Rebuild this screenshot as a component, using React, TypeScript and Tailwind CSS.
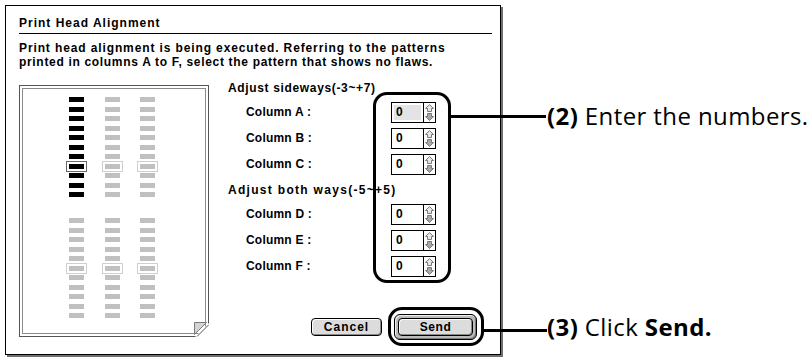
import React from 'react';

const ui = "[font-family:'Liberation_Sans',Arial,sans-serif] font-bold text-[12px] text-black";

const barY1 = Array.from({ length: 11 }, (_, i) => 8 + i * 9.5);
const barY2 = Array.from({ length: 11 }, (_, i) => 129 + i * 9.5);
const barX = [46, 82, 117];

function Pattern() {
  return (
    <div className="relative w-[190px] h-[252px] border border-[#555] p-[2px] bg-white">
      <div className="h-full border border-[#8a8a8a]">
        <svg width="182" height="244" viewBox="0 0 182 244" className="block" shapeRendering="crispEdges">
          {barX.map((x, c) =>
            barY1.map((y, i) => (
              <g key={`a${c}${i}`}>
                {i === 7 && (
                  <rect x={x - 2.5} y={y - 2.5} width={20} height={10} fill="none" stroke={c === 0 ? '#6a6a6a' : '#cfcfcf'} />
                )}
                <rect x={x} y={y} width={15} height={5} fill={c === 0 ? '#000' : '#c0c0c0'} />
              </g>
            ))
          )}
          {barX.map((x, c) =>
            barY2.map((y, i) => (
              <g key={`b${c}${i}`}>
                {i === 5 && <rect x={x - 2.5} y={y - 2.5} width={20} height={10} fill="none" stroke="#cfcfcf" />}
                <rect x={x} y={y} width={15} height={5} fill="#c0c0c0" />
              </g>
            ))
          )}
        </svg>
      </div>
      {/* folded corner */}
      <svg width="16" height="16" viewBox="0 0 16 16" className="absolute right-[-1px] bottom-[-1px]">
        <polygon points="2,16 16,16 16,2" fill="#fff" />
        <line x1="4" y1="15.5" x2="15.5" y2="4" stroke="#555" />
        <polygon points="1.5,13.5 13.5,1.5 1.5,1.5" fill="#d4d4d4" stroke="#7a7a7a" />
      </svg>
    </div>
  );
}

function Spinner() {
  return (
    <svg width="11" height="19" viewBox="0 0 11 19" className="block">
      <path d="M5.5 1.5 L9.5 5.5 L7.5 5.5 L7.5 8.5 L3.5 8.5 L3.5 5.5 L1.5 5.5 Z" fill="#e6e6e6" stroke="#7a7a7a" />
      <path d="M3.5 10.5 L7.5 10.5 L7.5 13.5 L9.5 13.5 L5.5 17.5 L1.5 13.5 L3.5 13.5 Z" fill="#a8a8a8" stroke="#7a7a7a" />
    </svg>
  );
}

function NumberField({ focused = false }: { focused?: boolean }) {
  return (
    <div className="flex h-[21px] border border-black bg-white">
      <div className="w-[31px] p-[2px]">
        <div className={focused ? 'h-full pl-[2px] leading-[15px] bg-[#e4e4e4]' : 'h-full pl-[2px] leading-[15px]'}>0</div>
      </div>
      <div className="w-[12px] border-l border-black flex items-center justify-center">
        <Spinner />
      </div>
    </div>
  );
}

function FieldRow({ letter, focused }: { letter: string; focused?: boolean }) {
  return (
    <div className="flex h-[26px] items-center pl-[18px]">
      <span className="w-[145px] tracking-[0.2px]">Column {letter} :</span>
      <NumberField focused={focused} />
    </div>
  );
}

export default function App() {
  return (
    <div className="relative flex items-start w-[809px] h-[357px] bg-white overflow-hidden">
      {/* Dialog */}
      <div className={`${ui} ml-[5px] mt-[5px] w-[496px] h-[350px] border border-black bg-white shadow-[2px_2px_0_#707070] pl-[13px] pr-[8px] pt-[10px] leading-[14px] whitespace-nowrap`}>
        <div className="h-[14px] tracking-[1px]">Print Head Alignment</div>
        <div className="mt-[3px] h-px bg-black" />
        <div className="mt-[7px]">
          <div className="tracking-[0.88px]">Print head alignment is being executed. Referring to the patterns</div>
          <div className="tracking-[0.68px]">printed in columns A to F, select the pattern that shows no flaws.</div>
        </div>

        <div className="mt-[8px] flex gap-[19px]">
          <div className="pt-[8px]">
            <Pattern />
          </div>

          <div className="flex-1 flex flex-col">
            <div className="h-[22px] flex items-center tracking-[0.65px]">Adjust sideways(-3~+7)</div>
            <FieldRow letter="A" focused />
            <FieldRow letter="B" />
            <FieldRow letter="C" />
            <div className="h-[24px] flex items-center pt-[2px] tracking-[1.3px]">Adjust both ways(-5~+5)</div>
            <FieldRow letter="D" />
            <FieldRow letter="E" />
            <FieldRow letter="F" />

            <div className="mt-[35px] flex items-center justify-end gap-[12px] pr-[15px]">
              <button className="w-[71px] h-[18px] rounded-[4px] border border-black bg-[#dcdcdc] shadow-[inset_1px_1px_0_#fff,inset_-1px_-1px_0_#8a8a8a] leading-[16px] tracking-[1px]">
                Cancel
              </button>
              <div className="rounded-[6px] border border-black bg-[#bcbcbc] p-[3px] shadow-[inset_1px_1px_0_#eee,inset_-1px_-1px_0_#777]">
                <button className="block w-[75px] h-[18px] rounded-[4px] border border-black bg-[#dcdcdc] shadow-[inset_1px_1px_0_#fff,inset_-1px_-1px_0_#8a8a8a] leading-[16px] tracking-[0.6px]">
                  Send
                </button>
              </div>
            </div>
          </div>
        </div>
      </div>

      {/* Annotations */}
      <div className="flex flex-col pl-[46px] pt-[102px] [font-family:'Open_Sans',sans-serif] text-[24px] leading-[28px] tracking-[0.4px] text-black whitespace-nowrap">
        <div>
          <span className="font-bold">(2)</span> Enter the numbers.
        </div>
        <div className="mt-[183px]">
          <span className="font-bold">(3)</span> Click <span className="font-bold">Send.</span>
        </div>
      </div>

      {/* Callout frames and leader lines */}
      <div className="absolute left-[373px] top-[92px] w-[78px] h-[191px] border-[3px] border-black rounded-[14px]" />
      <div className="absolute left-[450px] top-[115px] w-[96px] h-[3px] bg-black" />
      <div className="absolute left-[388px] top-[307px] w-[96px] h-[39px] border-[3px] border-black rounded-[14px]" />
      <div className="absolute left-[483px] top-[329px] w-[64px] h-[3px] bg-black" />
    </div>
  );
}
